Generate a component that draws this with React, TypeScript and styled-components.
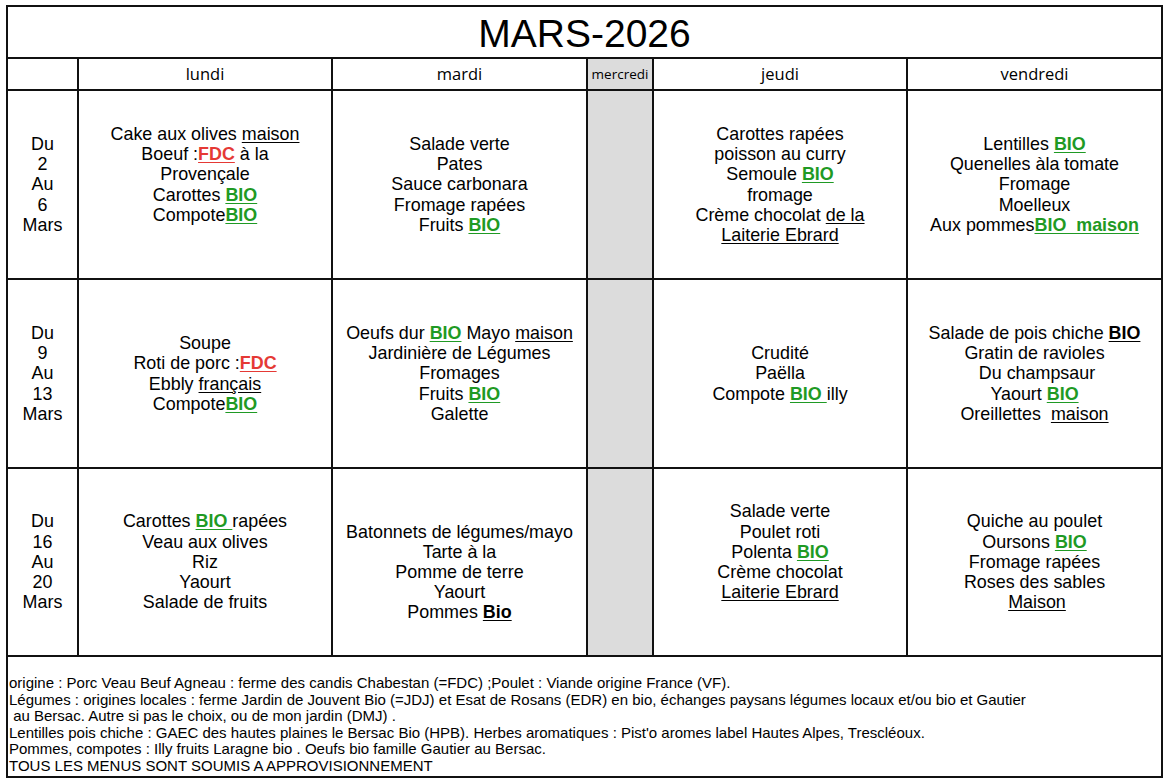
import React from "react";
import styled, { createGlobalStyle } from "styled-components";

const GlobalStyle = createGlobalStyle`
  body {
    margin: 0;
    background: #fff;
    font-family: "Liberation Sans", Arial, sans-serif;
    color: #000;
  }
`;

const Page = styled.div`
  padding: 5px 0 0 6px;
`;

const Sheet = styled.div`
  display: grid;
  grid-template-columns: 71px 254px 255px 66px 254px 255px;
  grid-template-rows: 52px 32px 189px 189px 188px 121px;
  width: 1157px;
  box-sizing: border-box;
  border-top: 2px solid #111;
  border-left: 2px solid #111;
`;

const Cell = styled.div<{ $off?: boolean }>`
  box-sizing: border-box;
  border-right: 2px solid #111;
  border-bottom: 2px solid #111;
  background: ${(p) => (p.$off ? "#dcdcdc" : "#fff")};
  display: flex;
  flex-direction: column;
  align-items: center;
  justify-content: center;
  text-align: center;
`;

const TitleCell = styled(Cell)`
  grid-column: 1 / -1;
  font-size: 39px;
  line-height: 1;
  padding-top: 2px;
`;

const DayHead = styled(Cell)<{ $small?: boolean }>`
  font-family: "Open Sans", "Liberation Sans", sans-serif;
  font-size: ${(p) => (p.$small ? "13.5px" : "16.5px")};
  padding-bottom: 1px;
  white-space: nowrap;
`;

const WeekCell = styled(Cell)`
  font-size: 17.9px;
  line-height: 20.2px;
`;

const MenuCell = styled(Cell)`
  font-size: 17.9px;
  line-height: 20.2px;
  white-space: pre;
`;

const Line = styled.div``;

const Mark = styled.span<{ $tone: "bio" | "fdc" | "u" | "b" }>`
  text-decoration: underline;
  text-underline-offset: 2px;
  font-weight: ${(p) => (p.$tone === "u" ? 400 : 700)};
  color: ${(p) =>
    p.$tone === "bio" ? "#1f9a24" : p.$tone === "fdc" ? "#e53935" : "#000"};
`;

const Footer = styled(Cell)`
  grid-column: 1 / -1;
  align-items: flex-start;
  justify-content: flex-start;
  text-align: left;
  font-size: 15px;
  line-height: 16.6px;
  padding: 18px 0 0 1px;
  white-space: pre;
`;

type Seg = string | { t: string; k: "bio" | "fdc" | "u" | "b" };
type Menu = Seg[][];

const bio = (t = "BIO"): Seg => ({ t, k: "bio" });
const u = (t: string): Seg => ({ t, k: "u" });

const days = ["lundi", "mardi", "mercredi", "jeudi", "vendredi"];

const weeks: { from: string; to: string; menus: Menu[] }[] = [
  {
    from: "2",
    to: "6",
    menus: [
      [
        ["Cake aux olives ", u("maison")],
        ["Boeuf :", { t: "FDC", k: "fdc" }, " à la"],
        ["Provençale"],
        ["Carottes ", bio()],
        ["Compote", bio()],
        [" "],
      ],
      [["Salade verte"], ["Pates"], ["Sauce carbonara"], ["Fromage rapées"], ["Fruits ", bio()]],
      [
        ["Carottes rapées"],
        ["poisson au curry"],
        ["Semoule ", bio()],
        ["fromage"],
        ["Crème chocolat ", u("de la")],
        [u("Laiterie Ebrard")],
      ],
      [
        ["Lentilles ", bio()],
        ["Quenelles àla tomate"],
        ["Fromage"],
        ["Moelleux"],
        ["Aux pommes", bio("BIO  maison")],
      ],
    ],
  },
  {
    from: "9",
    to: "13",
    menus: [
      [["Soupe"], ["Roti de porc :", { t: "FDC", k: "fdc" }], ["Ebbly ", u("français")], ["Compote", bio()]],
      [
        ["Oeufs dur ", bio(), " Mayo ", u("maison")],
        ["Jardinière de Légumes"],
        ["Fromages"],
        ["Fruits ", bio()],
        ["Galette"],
      ],
      [["Crudité"], ["Paëlla"], ["Compote ", bio("BIO "), "illy"]],
      [
        ["Salade de pois chiche ", { t: "BIO", k: "b" }],
        ["Gratin de ravioles"],
        [" Du champsaur"],
        ["Yaourt ", bio()],
        ["Oreillettes  ", u("maison")],
      ],
    ],
  },
  {
    from: "16",
    to: "20",
    menus: [
      [["Carottes ", bio("BIO "), "rapées"], ["Veau aux olives"], ["Riz"], ["Yaourt"], ["Salade de fruits"]],
      [
        [" "],
        ["Batonnets de légumes/mayo"],
        ["Tarte à la"],
        ["Pomme de terre"],
        ["Yaourt"],
        ["Pommes ", { t: "Bio", k: "b" }],
      ],
      [
        ["Salade verte"],
        ["Poulet roti"],
        ["Polenta ", bio()],
        ["Crème chocolat"],
        [u("Laiterie Ebrard")],
        [" "],
      ],
      [["Quiche au poulet"], ["Oursons ", bio()], ["Fromage rapées"], ["Roses des sables"], [" ", u("Maison")]],
    ],
  },
];

const notes = [
  "origine : Porc Veau Beuf Agneau : ferme des candis Chabestan (=FDC) ;Poulet : Viande origine France (VF).",
  "Légumes : origines locales : ferme Jardin de Jouvent Bio (=JDJ) et Esat de Rosans (EDR) en bio, échanges paysans légumes locaux et/ou bio et Gautier",
  " au Bersac. Autre si pas le choix, ou de mon jardin (DMJ) .",
  "Lentilles pois chiche : GAEC des hautes plaines le Bersac Bio (HPB). Herbes aromatiques : Pist'o aromes label Hautes Alpes, Trescléoux.",
  "Pommes, compotes : Illy fruits Laragne bio . Oeufs bio famille Gautier au Bersac.",
  "TOUS LES MENUS SONT SOUMIS A APPROVISIONNEMENT",
];

const MenuLines = ({ menu }: { menu: Menu }) => (
  <>
    {menu.map((line, i) => (
      <Line key={i}>
        {line.map((s, j) =>
          typeof s === "string" ? (
            <React.Fragment key={j}>{s}</React.Fragment>
          ) : (
            <Mark key={j} $tone={s.k}>
              {s.t}
            </Mark>
          )
        )}
      </Line>
    ))}
  </>
);

export default function App() {
  return (
    <Page>
      <GlobalStyle />
      <Sheet>
        <TitleCell>MARS-2026</TitleCell>
        <DayHead />
        {days.map((d) => (
          <DayHead key={d} $off={d === "mercredi"} $small={d === "mercredi"}>
            {d}
          </DayHead>
        ))}
        {weeks.map((w) => (
          <React.Fragment key={w.from}>
            <WeekCell>
              <Line>Du</Line>
              <Line>{w.from}</Line>
              <Line>Au</Line>
              <Line>{w.to}</Line>
              <Line>Mars</Line>
            </WeekCell>
            <MenuCell>
              <MenuLines menu={w.menus[0]} />
            </MenuCell>
            <MenuCell>
              <MenuLines menu={w.menus[1]} />
            </MenuCell>
            <MenuCell $off />
            <MenuCell>
              <MenuLines menu={w.menus[2]} />
            </MenuCell>
            <MenuCell>
              <MenuLines menu={w.menus[3]} />
            </MenuCell>
          </React.Fragment>
        ))}
        <Footer>
          {notes.map((n, i) => (
            <Line key={i}>{n}</Line>
          ))}
        </Footer>
      </Sheet>
    </Page>
  );
}
